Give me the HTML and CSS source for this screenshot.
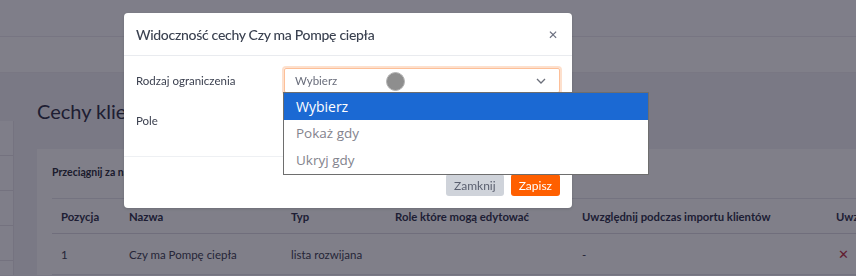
FILE: index.html
```html
<!DOCTYPE html>
<html>
<head>
<meta charset="utf-8">
<title>Cechy klientów</title>
<link rel="stylesheet" href="styles.css">
</head>
<body>
<div class="topbar"></div>
<div class="subbar"></div>
<div class="main">
  <div class="sidebar">
    <div class="side-item"></div>
    <div class="side-item"></div>
    <div class="side-item"></div>
    <div class="side-item"></div>
  </div>
  <div class="content">
    <h1 class="page-title">Cechy klientów</h1>
    <div class="card">
      <p class="hint">Przeciągnij za nazwę, aby zmienić kolejność cech</p>
      <table class="grid">
        <thead>
          <tr>
            <th class="c-pos">Pozycja</th>
            <th class="c-name">Nazwa</th>
            <th class="c-type">Typ</th>
            <th class="c-roles">Role które mogą edytować</th>
            <th class="c-import">Uwzględnij podczas importu klientów</th>
            <th class="c-last">Uwzględnij</th>
          </tr>
        </thead>
        <tbody>
          <tr>
            <td>1</td>
            <td>Czy ma Pompę ciepła</td>
            <td>lista rozwijana</td>
            <td></td>
            <td>-</td>
            <td class="no">&#x2715;</td>
          </tr>
        </tbody>
      </table>
    </div>
  </div>
</div>

<div class="overlay">
  <div class="modal">
    <div class="modal-head">
      <h2 class="modal-title">Widoczność cechy Czy ma Pompę ciepła</h2>
      <span class="modal-close">&#x2715;</span>
    </div>
    <div class="modal-body">
      <div class="form-row">
        <label class="form-label">Rodzaj ograniczenia</label>
        <div class="select-wrap">
          <div class="select focused">
            <span>Wybierz</span>
            <svg class="chevron" width="10" height="6" viewBox="0 0 10 6"><path d="M1 1l4 4 4-4" fill="none" stroke="#6b6f7a" stroke-width="1.3"/></svg>
          </div>
          <ul class="dropdown">
            <li class="selected">Wybierz</li>
            <li>Pokaż gdy</li>
            <li>Ukryj gdy</li>
          </ul>
          <span class="cursor"></span>
        </div>
      </div>
      <div class="form-row">
        <label class="form-label">Pole</label>
        <div class="select-wrap">
          <div class="select"></div>
        </div>
      </div>
    </div>
    <div class="modal-foot">
      <button class="btn btn-light">Zamknij</button>
      <button class="btn btn-primary">Zapisz</button>
    </div>
  </div>
</div>
</body>
</html>
```

FILE: styles.css
```css
body {
  margin: 0;
  font-family: Lato, "Open Sans", sans-serif;
  background-color: #f3f2f6;
  color: #3a3c4a;
  overflow: hidden;
  height: 276px;
}

.topbar {
  height: 36px;
  background: #fdfdff;
  border-bottom: 1px solid #ecebf0;
}

.subbar {
  height: 35px;
  background: #ffffff;
  border-bottom: 1px solid #f0eff3;
}

.main {
  display: flex;
}

.sidebar {
  flex-shrink: 0;
  width: 13px;
  margin-top: 48px;
  background: #fdfdff;
  border-right: 1px solid #e8e7ec;
}

.side-item {
  height: 34px;
  border-bottom: 1px solid #e6e5ea;
}

.content {
  flex: 1;
  min-width: 0;
  padding-left: 23px;
}

.page-title {
  margin: 23px 0 0;
  font-size: 20px;
  font-weight: 400;
  line-height: 30px;
  color: #3b3d51;
}

.card {
  margin-top: 23px;
  background: #ffffff;
  padding: 13px 15px 0;
}

.hint {
  margin: 0;
  font-size: 10.5px;
  font-weight: 700;
  line-height: 20px;
  color: #363846;
}

.grid {
  margin-top: 16px;
  width: 900px;
  table-layout: fixed;
  border-collapse: collapse;
  font-size: 11.5px;
}

.grid th,
.grid td {
  text-align: left;
  padding: 0 9px;
  white-space: nowrap;
  overflow: hidden;
}

.grid th {
  height: 34px;
  border-top: 1px solid #e7e6ec;
  border-bottom: 1px solid #dedde4;
  font-size: 11.3px;
  font-weight: 700;
  color: #3a3d55;
}

.grid td {
  height: 40px;
  border-bottom: 1px solid #e7e6ec;
  color: #4a4c5c;
}

.c-pos { width: 50px; }
.c-name { width: 144px; }
.c-type { width: 86px; }
.c-roles { width: 169px; }
.c-import { width: 236px; }
.c-last { width: 120px; }

.grid .no {
  color: #c23a4d;
  font-size: 13px;
  padding-left: 11px;
}

.overlay {
  position: fixed;
  inset: 0;
  background: rgba(2, 0, 20, 0.5);
}

.modal {
  position: absolute;
  left: 124px;
  top: 13px;
  width: 448px;
  height: 195px;
  background: #ffffff;
  border-radius: 4px;
  box-shadow: 0 1px 3px rgba(0, 0, 0, 0.15);
}

.modal-head {
  display: flex;
  align-items: center;
  justify-content: space-between;
  height: 42px;
  padding: 0 12px;
  border-bottom: 1px solid #e9ebef;
}

.modal-title {
  margin: 0;
  font-size: 14px;
  font-weight: 500;
  letter-spacing: -0.3px;
  color: #3a4150;
}

.modal-close {
  font-size: 12px;
  color: #6c7080;
  margin-right: 2px;
}

.modal-body {
  height: 88px;
  padding: 12px 12px 0;
  border-bottom: 1px solid #eef0f3;
}

.form-row {
  display: flex;
  align-items: center;
  height: 25px;
  margin-bottom: 15px;
}

.form-label {
  width: 148px;
  font-size: 11.5px;
  color: #3c4150;
}

.select-wrap {
  position: relative;
  width: 276px;
  height: 25px;
}

.select {
  box-sizing: border-box;
  height: 25px;
  display: flex;
  align-items: center;
  justify-content: space-between;
  padding: 0 10px;
  border: 1px solid #ced4da;
  border-radius: 2px;
  font-size: 11.5px;
  color: #6a6e7c;
}

.select.focused {
  border-color: #fdbf98;
  box-shadow: 0 0 0 2px #fde0cd;
}

.chevron {
  margin-right: 3px;
}

.dropdown {
  position: absolute;
  left: -1px;
  top: 24px;
  width: 364px;
  margin: 0;
  padding: 0;
  list-style: none;
  background: #ffffff;
  border: 1px solid #6e6e6e;
  font-family: "Open Sans", sans-serif;
  font-size: 13.5px;
  z-index: 2;
}

.dropdown li {
  height: 27px;
  line-height: 27px;
  padding-left: 12px;
  color: #83838d;
}

.dropdown li.selected {
  background: #1b69d3;
  color: #ffffff;
  font-size: 14px;
}

.cursor {
  position: absolute;
  left: 102px;
  top: 4px;
  width: 19px;
  height: 19px;
  border-radius: 50%;
  background: #8e8e8e;
  border: 1px solid #b3b3b3;
  box-sizing: border-box;
  z-index: 3;
}

.modal-foot {
  display: flex;
  justify-content: flex-end;
  gap: 7px;
  padding: 17px 12px 0;
}

.btn {
  height: 22px;
  border: none;
  border-radius: 3px;
  font-family: Lato, sans-serif;
  font-size: 12px;
  padding: 0 8px;
}

.btn-light {
  background: #cfd3da;
  color: #5b6070;
}

.btn-primary {
  background: #ff5f00;
  color: #ffffff;
}
```
